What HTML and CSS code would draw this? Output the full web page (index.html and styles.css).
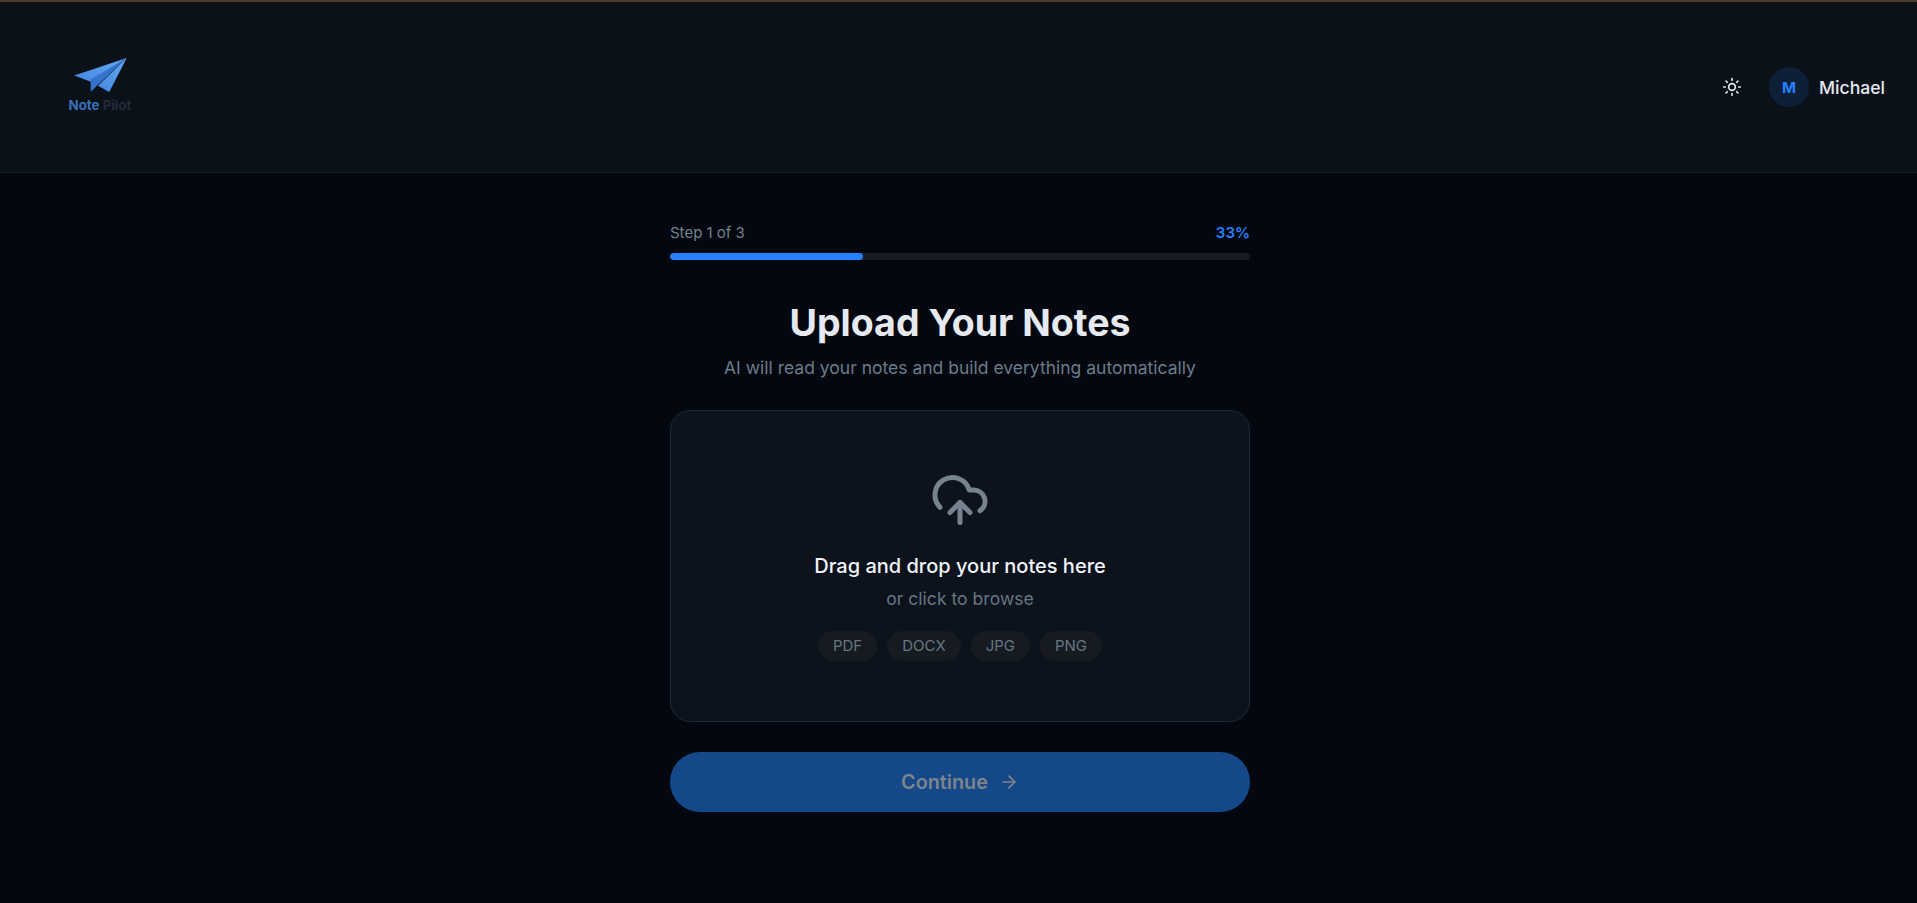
FILE: index.html
```html
<!DOCTYPE html>
<html lang="en">
<head>
<meta charset="utf-8">
<title>Note Pilot</title>
<link rel="stylesheet" href="styles.css">
</head>
<body>
<header class="topbar">
  <div class="brand">
    <svg class="plane" viewBox="0 0 52 36" width="54" height="37" aria-hidden="true">
      <defs>
        <linearGradient id="pg" x1="0" y1="1" x2="1" y2="0">
          <stop offset="0" stop-color="#4288e2"/>
          <stop offset="1" stop-color="#66a8f2"/>
        </linearGradient>
      </defs>
      <polygon points="0,18 51,1 16,24" fill="url(#pg)"/>
      <polygon points="16,22 51,1 23,27 16,34" fill="#3473cc"/>
      <polygon points="51,1 34,34 23,28" fill="url(#pg)"/>
    </svg>
    <div class="brand-name"><span class="note">Note</span> <span class="pilot">Pilot</span></div>
  </div>
  <div class="actions">
    <svg class="sun" viewBox="0 0 24 24" width="20" height="20" fill="none" stroke="currentColor" stroke-width="2" stroke-linecap="round" stroke-linejoin="round" aria-hidden="true">
      <circle cx="12" cy="12" r="4"/>
      <path d="M12 2v2"/><path d="M12 20v2"/><path d="m4.93 4.93 1.41 1.41"/><path d="m17.66 17.66 1.41 1.41"/><path d="M2 12h2"/><path d="M20 12h2"/><path d="m6.34 17.66-1.41 1.41"/><path d="m19.07 4.93-1.41 1.41"/>
    </svg>
    <div class="user">
      <div class="avatar">M</div>
      <span class="user-name">Michael</span>
    </div>
  </div>
</header>
<main class="content">
  <div class="column">
    <div class="progress-labels"><span class="step">Step 1 of 3</span><span class="pct">33%</span></div>
    <div class="track"><div class="fill"></div></div>
    <h1 class="title">Upload Your Notes</h1>
    <p class="subtitle">AI will read your notes and build everything automatically</p>
    <section class="dropzone">
      <svg class="cloud" viewBox="0 0 24 24" width="60" height="60" fill="none" stroke="currentColor" stroke-width="2" stroke-linecap="round" stroke-linejoin="round" aria-hidden="true">
        <path d="M12 13v8"/><path d="M4 14.899A7 7 0 1 1 15.71 8h1.79a4.5 4.5 0 0 1 2.5 8.242"/><path d="m8 17 4-4 4 4"/>
      </svg>
      <div class="drop-title">Drag and drop your notes here</div>
      <div class="drop-sub">or click to browse</div>
      <div class="chips">
        <span class="chip">PDF</span><span class="chip">DOCX</span><span class="chip">JPG</span><span class="chip">PNG</span>
      </div>
    </section>
    <button class="continue" type="button">
      <span>Continue</span>
      <svg viewBox="0 0 24 24" width="20" height="20" fill="none" stroke="currentColor" stroke-width="2" stroke-linecap="round" stroke-linejoin="round" aria-hidden="true"><path d="M5 12h14"/><path d="m12 5 7 7-7 7"/></svg>
    </button>
  </div>
</main>
</body>
</html>
```
FILE: styles.css
```css
* { box-sizing: border-box; }
html, body { height: 100%; }
body {
  margin: 0;
  background: #030810;
  color: #e6e9ef;
  font-family: Inter, "Liberation Sans", sans-serif;
  overflow: hidden;
}
.topbar {
  height: 173px;
  background: #0b1119;
  border-top: 2px solid #4a3b2a;
  border-bottom: 1px solid #171c26;
  padding: 55px 32px 0 69px;
  display: flex;
  justify-content: space-between;
  align-items: flex-start;
}
.brand {
  display: flex;
  flex-direction: column;
  align-items: center;
  width: 64px;
}
.plane { display: block; }
.brand-name {
  font-size: 13.3px;
  font-weight: 700;
  line-height: 16px;
  margin-top: 3px;
  margin-left: -2px;
  white-space: nowrap;
}
.note { color: #3a6fb8; }
.pilot { color: #232a3a; }
.actions {
  display: flex;
  align-items: center;
  gap: 27px;
  margin-top: 10px;
}
.sun { color: #e6e9ef; display: block; }
.user { display: flex; align-items: center; gap: 10px; }
.avatar {
  width: 40px;
  height: 40px;
  border-radius: 50%;
  background: #0e1f38;
  color: #2680ff;
  font-size: 15px;
  font-weight: 700;
  display: flex;
  align-items: center;
  justify-content: center;
}
.user-name { font-size: 17.6px; font-weight: 500; color: #e6e9ef; }
.content { display: flex; justify-content: center; padding-left: 3px; }
.column { width: 580px; padding-top: 49px; }
.progress-labels {
  display: flex;
  justify-content: space-between;
  align-items: center;
  height: 20px;
  font-size: 15px;
}
.step { color: #72808c; }
.pct { color: #2680ff; font-weight: 600; }
.track {
  height: 7px;
  margin-top: 11px;
  border-radius: 4px;
  background: #161b24;
  overflow: hidden;
}
.fill { width: 33.33%; height: 100%; border-radius: 4px; background: #2680ff; }
.title {
  margin: 41px 0 0;
  font-size: 37.5px;
  line-height: 44px;
  font-weight: 700;
  text-align: center;
  color: #e6e9ef;
}
.subtitle {
  margin: 11px 0 0;
  font-size: 17.5px;
  line-height: 24px;
  text-align: center;
  color: #6c7c88;
}
.dropzone {
  margin-top: 30px;
  height: 312px;
  border: 1px solid #222834;
  border-radius: 20px;
  background: #0d131c;
  display: flex;
  flex-direction: column;
  align-items: center;
  padding-top: 59px;
}
.cloud { color: #76838e; display: block; }
.drop-title {
  margin-top: 23px;
  font-size: 20px;
  line-height: 26px;
  font-weight: 500;
  color: #f0f3f7;
}
.drop-sub {
  margin-top: 10px;
  font-size: 17.6px;
  line-height: 20px;
  color: #667683;
}
.chips { display: flex; gap: 10px; margin-top: 22px; }
.chip {
  height: 30px;
  padding: 0 15px;
  border-radius: 15px;
  background: #161b21;
  color: #667683;
  font-size: 15px;
  line-height: 30px;
}
.continue {
  width: 100%;
  height: 60px;
  margin-top: 30px;
  border: 0;
  border-radius: 30px;
  background: #154889;
  color: #7d848c;
  font-family: inherit;
  font-size: 19.8px;
  font-weight: 600;
  display: flex;
  align-items: center;
  justify-content: center;
  gap: 11px;
}
```
